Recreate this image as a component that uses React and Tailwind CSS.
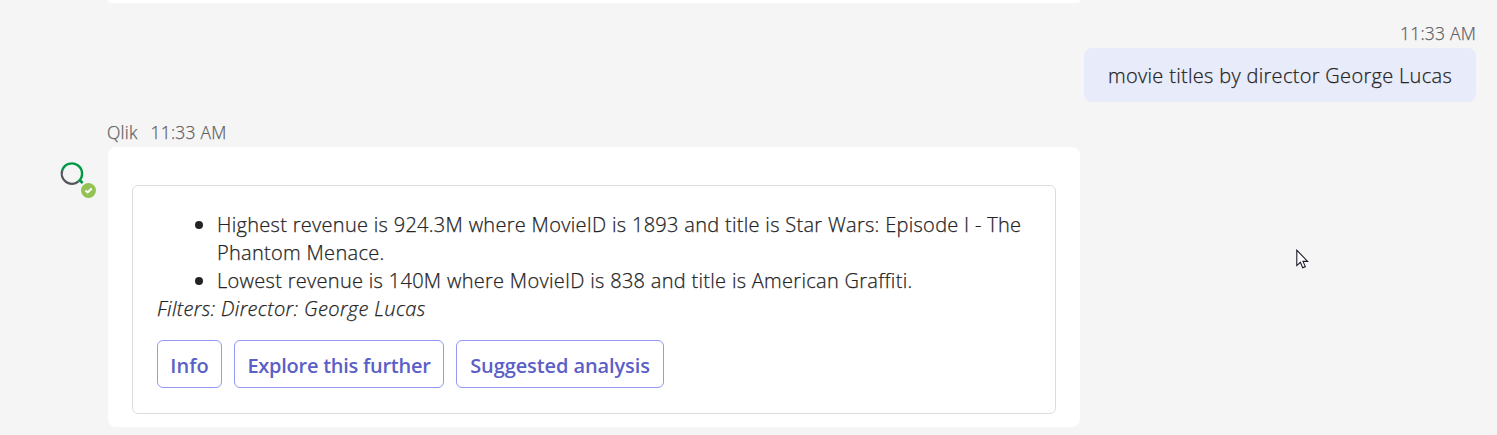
function QlikLogo() {
    return (
        <svg viewBox="0 0 26 26" className="size-[26px]" fill="none" strokeWidth="2.4">
            <path d="M3.3 9.2A10.2 10.2 0 0 0 19.5 20.4" stroke="#54565b" />
            <path d="M3.3 9.2A10.2 10.2 0 1 1 19.5 20.4" stroke="#009845" />
            <path d="M20 18.5L23.6 22" stroke="#009845" strokeWidth="2.6" />
        </svg>
    )
}

function Avatar() {
    return (
        <div className="relative ml-[59px] mt-[14px] h-[37px] w-[49px]">
            <QlikLogo />
            <svg viewBox="0 0 15 15" className="absolute left-[22px] top-[22px] size-[15px]">
                <circle cx="7.5" cy="7.5" r="7.5" fill="#92c353" />
                <path d="M4.5 7.6L6.6 9.5L10.7 5.5" fill="none" stroke="#fff" strokeWidth="2" />
            </svg>
        </div>
    )
}

function Cursor() {
    return (
        <svg viewBox="0 0 13 20" className="absolute left-[1296px] top-[249px] h-5 w-[13px]">
            <path d="M0.8 1.2V16.6L4.4 13.3L6.7 18.7L9.3 17.6L7 12.4H11.6Z" fill="#fff" stroke="#1b1b2b" strokeWidth="1.1" />
        </svg>
    )
}

function Insight({ children }) {
    return (
        <li className="flex gap-[14px]">
            <span className="mt-[10px] size-2 shrink-0 rounded-full bg-[#242424]" />
            <p className="tracking-[0.295px]">{children}</p>
        </li>
    )
}

function ActionButton({ children, className }) {
    return (
        <button className={`flex h-12 items-center justify-center whitespace-nowrap rounded-md border border-[#9299f7] pt-[3px] font-semibold text-[#5b5fc7] [-webkit-text-stroke:0px] ${className}`}>
            {children}
        </button>
    )
}

export default function App() {
    return (
        <main className="relative h-[435px] w-[1497px] overflow-hidden bg-[#f5f5f5] font-['Open_Sans',sans-serif] text-[20px] font-light leading-7 text-[#242424] [-webkit-text-stroke:0.25px]">
            <div className="ml-[108px] h-[3px] w-[972px] rounded-b-lg bg-white" />

            <section className="flex flex-col items-end pr-[21px] pt-[18px]">
                <time className="h-[27px] text-[17.5px] leading-6 tracking-[0.2px] text-[#616161]">11:33 AM</time>
                <div className="flex h-[54px] w-[392px] items-center whitespace-nowrap rounded-lg bg-[#e8ebfa] px-6 pt-0.5">
                    <p className="tracking-[0.31px]">movie titles by director George Lucas</p>
                </div>
            </section>

            <section className="pt-[18px]">
                <header className="ml-[107px] flex h-[27px] gap-[13px] text-[17.5px] leading-6 tracking-[0.2px] text-[#616161]">
                    <span>Qlik</span>
                    <time>11:33 AM</time>
                </header>
                <div className="flex">
                    <Avatar />
                    <div className="h-[280px] w-[972px] rounded-lg bg-white px-6 pt-[38px]">
                        <div className="h-[229px] rounded-md border border-[#dcdcdc] pl-6 pt-[25px]">
                            <ul className="whitespace-nowrap pl-[38px]">
                                <Insight>
                                    Highest revenue is 924.3M where MovieID is 1893 and title is Star Wars: Episode I - The<br />
                                    Phantom Menace.
                                </Insight>
                                <Insight>Lowest revenue is 140M where MovieID is 838 and title is American Graffiti.</Insight>
                            </ul>
                            <p className="italic tracking-[0.35px]">Filters: Director: George Lucas</p>
                            <div className="mt-[17px] flex gap-3">
                                <ActionButton className="w-[65px]">Info</ActionButton>
                                <ActionButton className="w-[210px] tracking-[-0.25px]">Explore this further</ActionButton>
                                <ActionButton className="w-[208px] tracking-[-0.1px]">Suggested analysis</ActionButton>
                            </div>
                        </div>
                    </div>
                </div>
            </section>
            <Cursor />
        </main>
    )
}
